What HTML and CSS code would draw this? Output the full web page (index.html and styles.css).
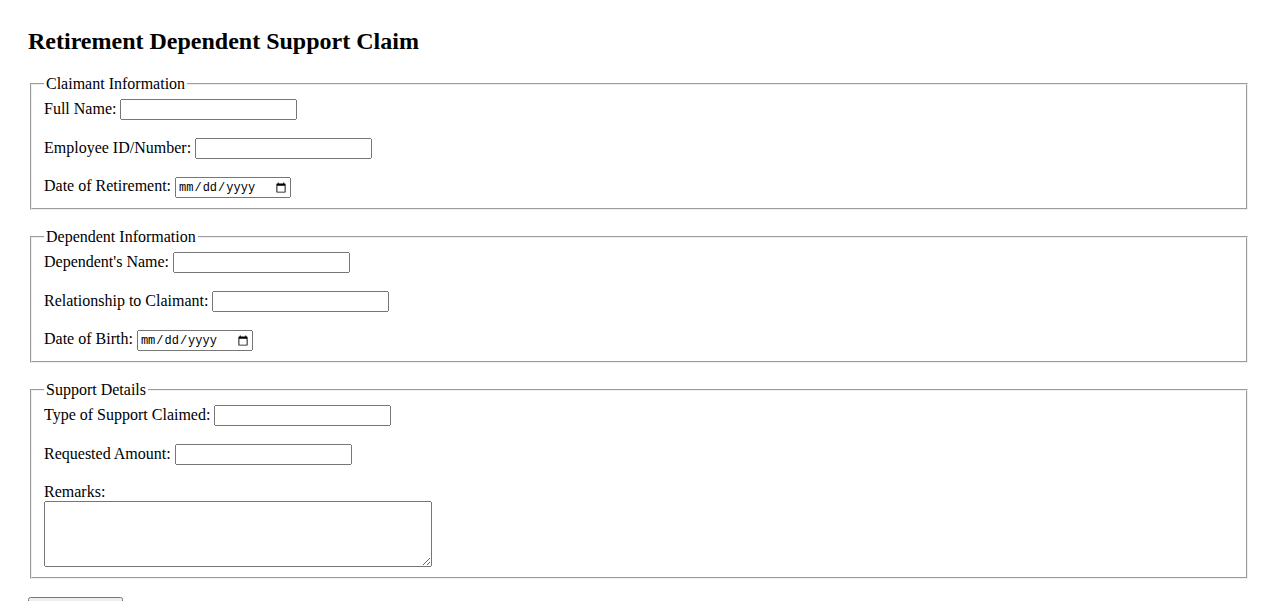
FILE: index.html
```html
<!DOCTYPE html>
<html lang="en">
<head>
    <meta charset="UTF-8">
    <meta name="viewport" content="width=device-width, initial-scale=1.0">
    <title>Retirement Dependent Support Claim</title>
    <link rel="stylesheet" href="styles.css">
</head>
<body>
    <h2 class="page-title">Retirement Dependent Support Claim</h2>
    <form class="claim-form">
        <fieldset>
            <legend>Claimant Information</legend>
            <label for="fullName">Full Name:</label>
            <input type="text" id="fullName" class="text-field"><br><br>
            <label for="employeeId">Employee ID/Number:</label>
            <input type="text" id="employeeId" class="text-field"><br><br>
            <label for="retireDate">Date of Retirement:</label>
            <input type="date" id="retireDate" class="date-field">
        </fieldset>
        <br>
        <fieldset>
            <legend>Dependent Information</legend>
            <label for="depName">Dependent's Name:</label>
            <input type="text" id="depName" class="text-field"><br><br>
            <label for="relationship">Relationship to Claimant:</label>
            <input type="text" id="relationship" class="text-field"><br><br>
            <label for="dob">Date of Birth:</label>
            <input type="date" id="dob" class="date-field">
        </fieldset>
        <br>
        <fieldset>
            <legend>Support Details</legend>
            <label for="supportType">Type of Support Claimed:</label>
            <input type="text" id="supportType" class="text-field"><br><br>
            <label for="amount">Requested Amount:</label>
            <input type="text" id="amount" class="text-field"><br><br>
            <label for="remarks">Remarks:</label><br>
            <textarea id="remarks" class="remarks-field"></textarea>
        </fieldset>
        <br>
        <button type="submit" class="submit-btn">Submit Claim</button>
    </form>
</body>
</html>
```

FILE: styles.css
```css
body {
    font-family: "Liberation Serif", "Times New Roman", serif;
    font-size: 16px;
    margin: 8px;
    padding: 20px;
    background-color: #fff;
    color: #000;
}

.page-title {
    font-size: 24px;
    margin: 0 0 20px 0;
}

.claim-form fieldset {
    margin: 0 2px;
}

.text-field {
    width: 177px;
    height: 21px;
    box-sizing: border-box;
}

.date-field {
    width: 116px;
    height: 21px;
    box-sizing: border-box;
    font-family: "Liberation Mono", monospace;
    font-size: 12px;
}

.remarks-field {
    width: 388px;
    height: 66px;
    box-sizing: border-box;
    vertical-align: top;
}

.submit-btn {
    font-family: "Liberation Sans", Arial, sans-serif;
    font-size: 13.33px;
    width: 95px;
}
```
